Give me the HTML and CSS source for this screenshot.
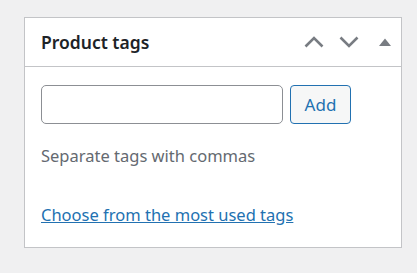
FILE: index.html
```html
<!DOCTYPE html>
<html lang="en">
<head>
  <meta charset="UTF-8" />
  <title>Product tags</title>
  <link rel="stylesheet" href="styles.css">
</head>
<body>
  <div class="postbox">
    <div class="postbox-header">
      <h2>Product tags</h2>
      <div class="handle-actions">
        <button class="handle-btn" aria-label="Move up">
          <svg width="20" height="12" viewBox="0 0 20 12"><path d="M1.5 10.5 L10 2 L18.5 10.5" fill="none" stroke="#787c82" stroke-width="2.6"/></svg>
        </button>
        <button class="handle-btn" aria-label="Move down">
          <svg width="20" height="12" viewBox="0 0 20 12"><path d="M1.5 1.5 L10 10 L18.5 1.5" fill="none" stroke="#787c82" stroke-width="2.6"/></svg>
        </button>
        <button class="handle-btn toggle" aria-label="Toggle panel">
          <svg width="12" height="8" viewBox="0 0 12 8"><path d="M0 8 L6 0.5 L12 8 Z" fill="#787c82"/></svg>
        </button>
      </div>
    </div>
    <div class="inside">
      <div class="tag-add">
        <input type="text" class="new-tag">
        <button class="button">Add</button>
      </div>
      <p class="howto">Separate tags with commas</p>
      <a href="#" class="tagcloud-link">Choose from the most used tags</a>
    </div>
  </div>
</body>
</html>
```

FILE: styles.css
```css
* {
  box-sizing: border-box;
  margin: 0;
  padding: 0;
}

body {
  background: #f0f0f1;
  font-family: "Noto Sans", "Open Sans", sans-serif;
  color: #3c434a;
  padding: 17px 15px 0 24px;
}

.postbox {
  width: 378px;
  height: 231px;
  background: #fff;
  border: 1px solid #c3c4c7;
}

.postbox-header {
  display: flex;
  align-items: center;
  justify-content: space-between;
  height: 49px;
  border-bottom: 1px solid #c3c4c7;
  padding: 0 0 0 16px;
}

.postbox-header h2 {
  font-size: 17.5px;
  font-weight: 600;
  color: #1d2327;
}

.handle-actions {
  display: flex;
  align-items: center;
}

.handle-btn {
  background: none;
  border: none;
  width: 35px;
  height: 36px;
  display: flex;
  align-items: center;
  justify-content: center;
}

.handle-btn.toggle {
  width: 33px;
  margin-left: 2px;
}

.inside {
  padding: 18px 16px 0;
}

.tag-add {
  display: flex;
  gap: 7px;
}

.new-tag {
  width: 242px;
  height: 39px;
  border: 1px solid #8c8f94;
  border-radius: 5px;
  background: #fff;
}

.button {
  width: 61px;
  height: 39px;
  border: 1px solid #2271b1;
  border-radius: 4px;
  background: #f6f7f7;
  color: #2271b1;
  font-family: inherit;
  font-size: 17px;
}

.howto {
  margin-top: 20px;
  font-size: 16.5px;
  color: #646970;
}

.tagcloud-link {
  display: inline-block;
  margin-top: 36px;
  font-size: 16.5px;
  color: #2271b1;
}
```
